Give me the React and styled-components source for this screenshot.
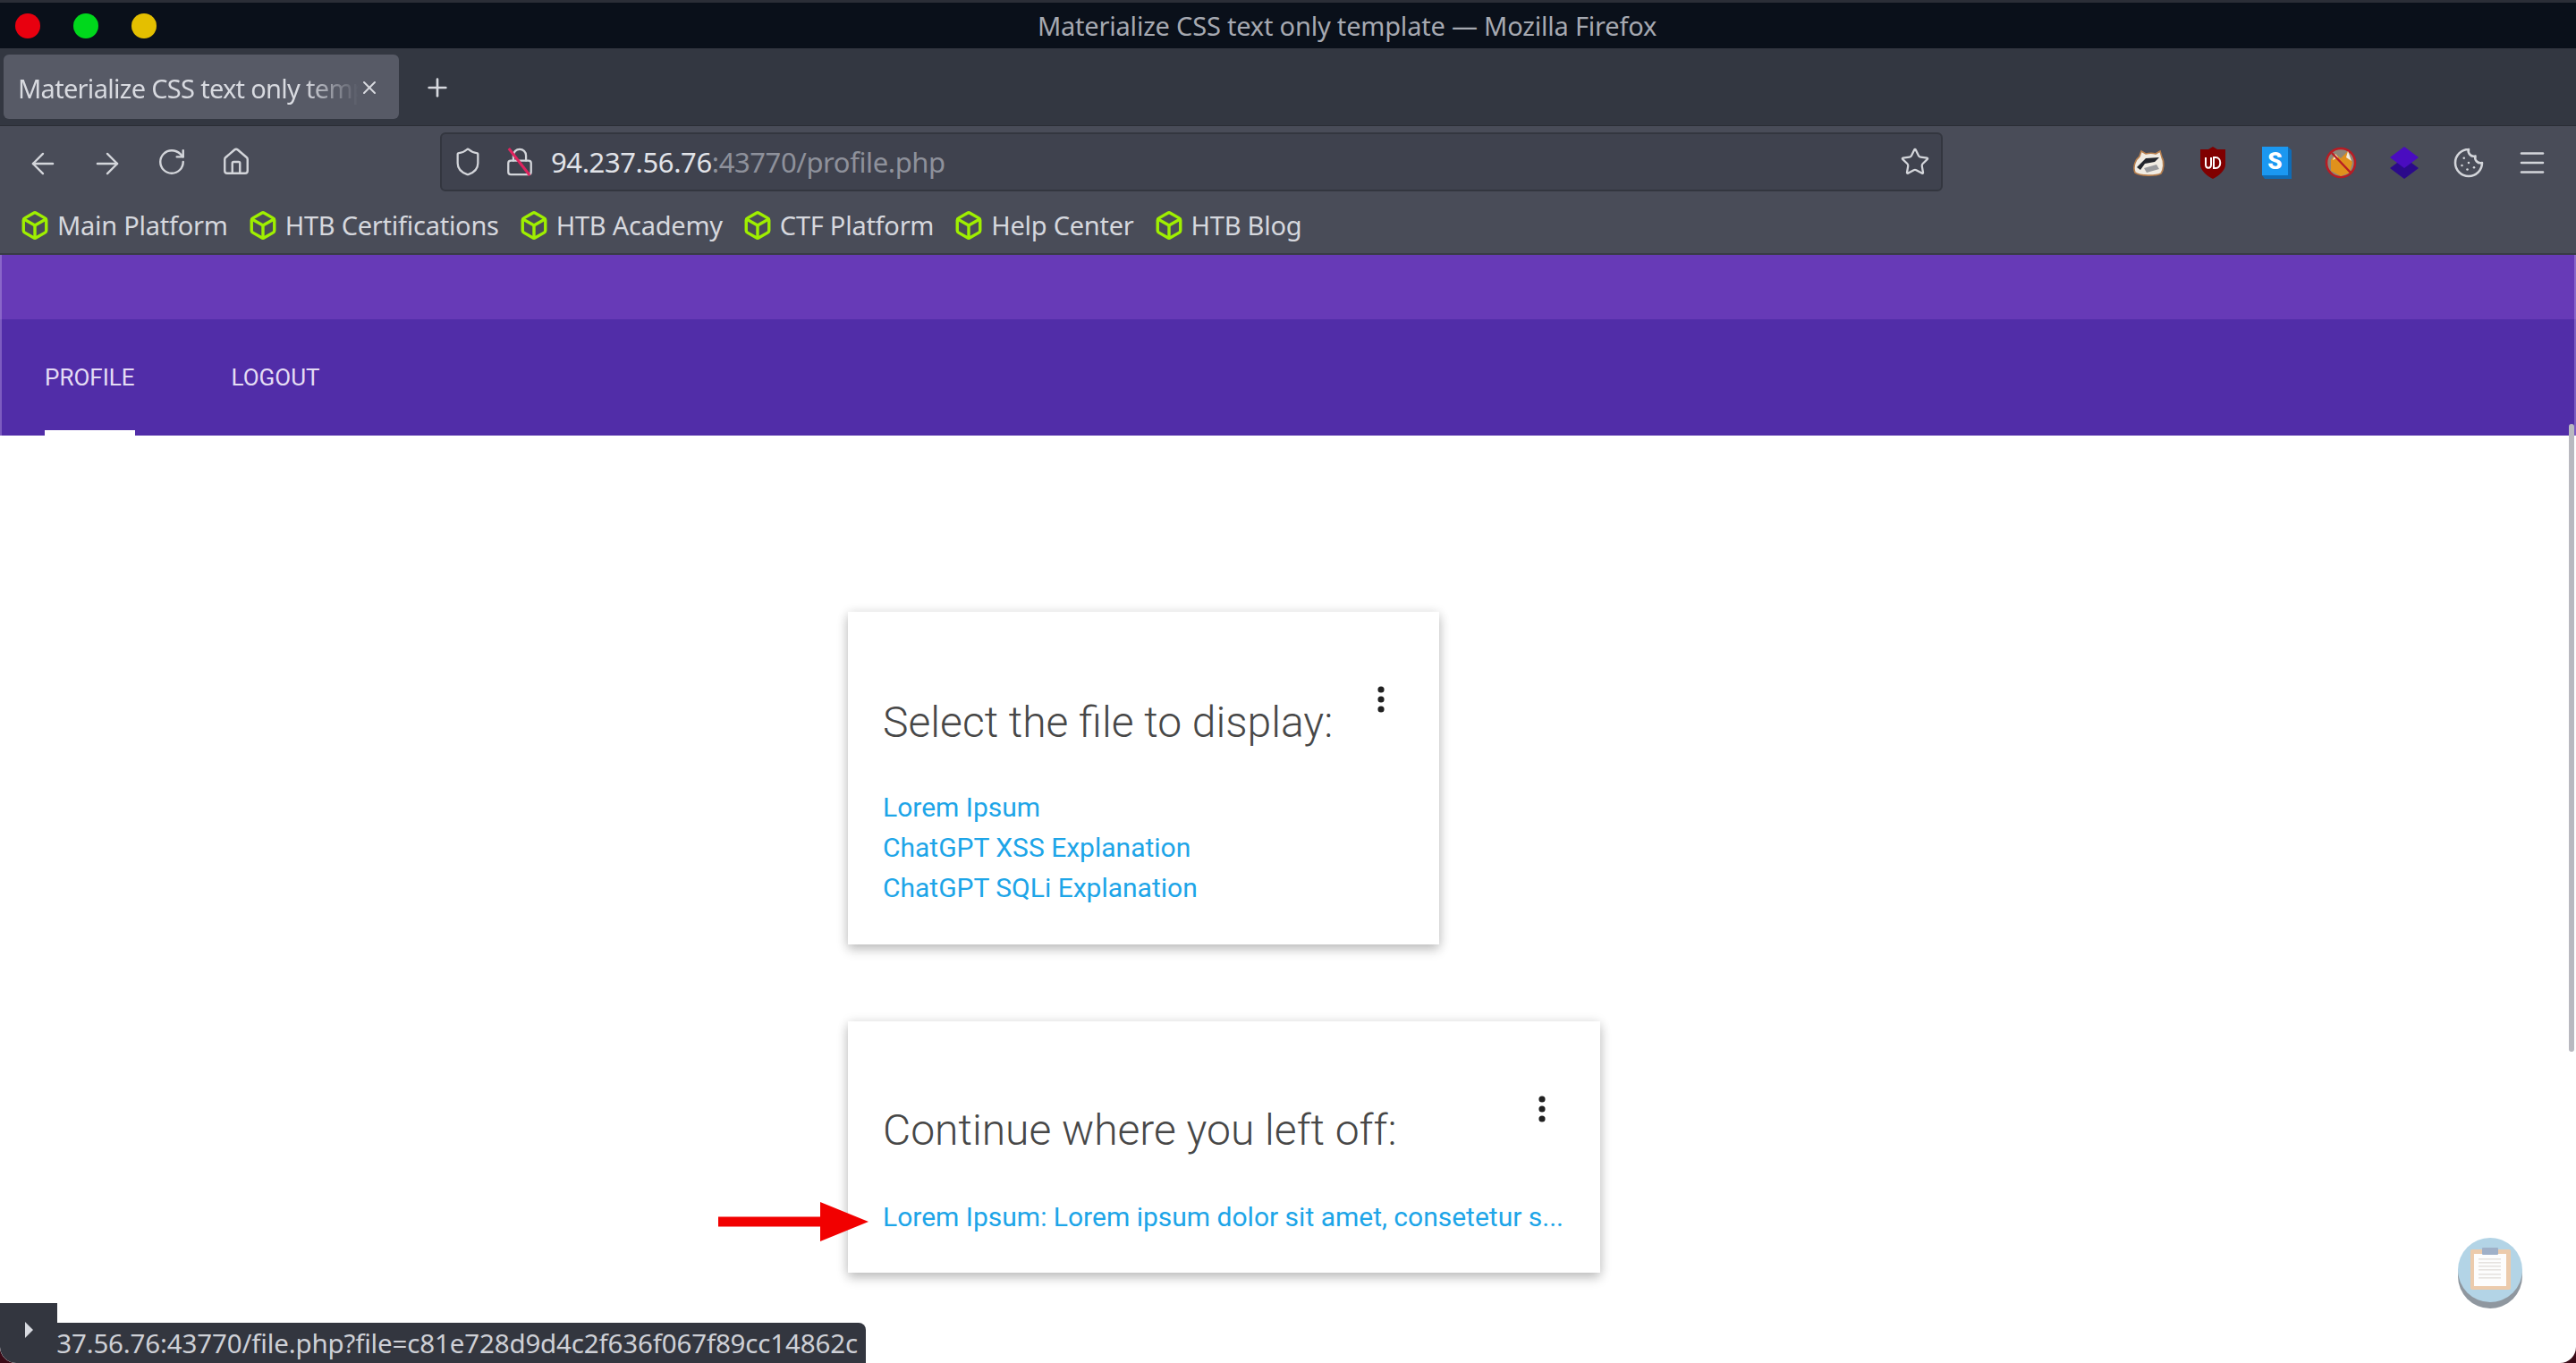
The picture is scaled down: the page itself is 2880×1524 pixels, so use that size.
import styled, { createGlobalStyle } from "styled-components";
import {
  ArrowLeft,
  ArrowRight,
  Box,
  Cookie,
  Home,
  Lock,
  Menu,
  Plus,
  RotateCw,
  Shield,
  Star,
  X,
} from "lucide-react";

const GlobalStyle = createGlobalStyle`
  html, body {
    margin: 0;
    padding: 0;
    height: 100%;
    background: #3a0a16;
    overflow: hidden;
  }
`;

const BrowserWindow = styled.div`
  position: relative;
  width: 2880px;
  height: 1524px;
  display: flex;
  flex-direction: column;
  overflow: hidden;
  border-radius: 0 0 18px 18px;
  background: #fff;
  font-family: "Noto Sans", sans-serif;
`;

const TitleBar = styled.div`
  height: 51px;
  flex: none;
  display: flex;
  align-items: center;
  padding-left: 17px;
  background: #0a101a;
  border-top: 3px solid #2b2e37;
`;

const TrafficLight = styled.span`
  width: 28px;
  height: 28px;
  margin-right: 37px;
  border-radius: 50%;
  background: ${({ $color }) => $color};
`;

const WindowTitle = styled.div`
  flex: 1;
  padding-right: 80px;
  text-align: center;
  color: #a6a9b1;
  font-size: 29px;
  letter-spacing: -0.2px;
`;

const TabStrip = styled.div`
  height: 87px;
  flex: none;
  display: flex;
  align-items: center;
  padding-left: 4px;
  box-sizing: border-box;
  background: #333741;
  border-bottom: 1px solid #2a2d35;
`;

const Tab = styled.div`
  width: 442px;
  height: 72px;
  box-sizing: border-box;
  display: flex;
  align-items: center;
  padding: 2px 21px 0 16px;
  border-radius: 6px;
  background: #575a66;
  color: #d8dae0;
  font-size: 29px;
  letter-spacing: -0.7px;
`;

const TabLabel = styled.span`
  flex: 1;
  overflow: hidden;
  white-space: nowrap;
  -webkit-mask-image: linear-gradient(to right, #000 84%, transparent 100%);
  mask-image: linear-gradient(to right, #000 84%, transparent 100%);
`;

const NewTab = styled.span`
  display: flex;
  margin-left: 27px;
  padding-top: 2px;
  color: #d6d8de;
`;

const NavBar = styled.div`
  height: 80px;
  flex: none;
  display: flex;
  align-items: center;
  background: #494c58;
`;

const NavIcon = styled.span`
  width: 72px;
  display: flex;
  justify-content: center;
  padding-top: 4px;
  color: #d3d5da;
`;

const NavButtons = styled.div`
  display: flex;
  width: 492px;
  padding-left: 12px;
  box-sizing: border-box;
`;

const UrlBar = styled.div`
  width: 1680px;
  height: 66px;
  flex: none;
  box-sizing: border-box;
  display: flex;
  align-items: center;
  padding: 0 12px 0 12px;
  border: 2px solid #33363f;
  border-radius: 6px;
  background: #3f424e;
  font-size: 31px;
  letter-spacing: -0.4px;
`;

const UrlIcon = styled.span`
  position: relative;
  display: flex;
  margin-right: ${({ $gap }) => $gap}px;
  color: #d3d5da;
`;

const LockSlash = styled.span`
  position: absolute;
  left: 15px;
  top: -2px;
  width: 3px;
  height: 38px;
  background: #e0245e;
  transform: rotate(-38deg);
`;

const UrlHost = styled.span`
  color: #e1e3e8;
`;

const UrlPath = styled.span`
  flex: 1;
  color: #8e919b;
`;

const Extensions = styled.div`
  flex: 1;
  display: flex;
  justify-content: flex-end;
  padding: 2px 13px 0 0;
`;

const ExtensionSlot = styled.span`
  width: 71.5px;
  height: 40px;
  display: flex;
  align-items: center;
  justify-content: center;
  color: #d3d5da;
`;

const BookmarksBar = styled.div`
  height: 64px;
  flex: none;
  display: flex;
  align-items: center;
  padding: 0 0 1px 22px;
  box-sizing: border-box;
  gap: 22px;
  background: #494c58;
  border-bottom: 2px solid #383b45;
`;

const Bookmark = styled.div`
  display: flex;
  align-items: center;
  gap: 8px;
  color: #d6d8de;
  font-size: 29px;
  letter-spacing: -0.25px;
  white-space: nowrap;
`;

const Header = styled.header`
  flex: none;
`;

const HeaderTop = styled.div`
  height: 72px;
  background: #673ab7;
  box-shadow: inset 2px 0 0 #8a66c9, inset -2px 0 0 #8a66c9;
`;

const TabsRow = styled.nav`
  height: 130px;
  display: flex;
  padding-left: 50px;
  gap: 108px;
  background: #512da8;
  box-shadow: inset 2px 0 0 #7d5cc0, inset -2px 0 0 #7d5cc0;
`;

const PageTab = styled.a`
  display: flex;
  align-items: center;
  box-sizing: border-box;
  height: 100%;
  padding-top: 6px;
  border-bottom: 6px solid ${({ $active }) => ($active ? "#fff" : "transparent")};
  color: #e4dcf4;
  font-family: Roboto, sans-serif;
  font-size: 26px;
  font-weight: 400;
  text-transform: uppercase;
`;

const Main = styled.main`
  flex: 1;
  display: flex;
  flex-direction: column;
  align-items: flex-start;
  gap: 86px;
  padding: 197px 0 0 948px;
  font-family: Roboto, sans-serif;
`;

const Card = styled.section`
  width: ${({ $width }) => $width}px;
  box-sizing: border-box;
  padding: ${({ $top }) => $top}px 39px ${({ $bottom }) => $bottom}px;
  background: #fff;
  box-shadow: 0 6px 12px rgba(0, 0, 0, 0.2), 0 1px 12px rgba(0, 0, 0, 0.12);
`;

const CardHead = styled.div`
  display: flex;
  justify-content: space-between;
  align-items: flex-start;
  margin-bottom: ${({ $gap }) => $gap}px;
`;

const CardTitle = styled.h2`
  margin: 0;
  color: #474747;
  font-size: 48px;
  font-weight: 300;
  line-height: 66px;
  white-space: nowrap;
`;

const MoreButton = styled.svg`
  flex: none;
  margin: ${({ $top }) => $top}px 20px 0 0;
`;

const FileLink = styled.a`
  display: block;
  color: #1da5e8;
  font-size: 30px;
  line-height: 45px;
  white-space: nowrap;
`;

const Arrow = styled.svg`
  position: absolute;
  left: 803px;
  top: 1344px;
`;

const Scrollbar = styled.div`
  position: absolute;
  left: 2872px;
  top: 474px;
  width: 6px;
  height: 702px;
  border-radius: 3px;
  background: #b9b9c0;
`;

const FloatingButton = styled.svg`
  position: absolute;
  left: 2744px;
  top: 1380px;
`;

const StatusToggle = styled.div`
  position: absolute;
  left: 0;
  bottom: 0;
  width: 64px;
  height: 67px;
  display: flex;
  align-items: center;
  justify-content: center;
  padding-bottom: 8px;
  box-sizing: border-box;
  border-bottom-left-radius: 18px;
  background: #33363f;
`;

const StatusPlay = styled.span`
  width: 0;
  height: 0;
  border-left: 9px solid #d8dae0;
  border-top: 9px solid transparent;
  border-bottom: 9px solid transparent;
`;

const StatusBar = styled.div`
  position: absolute;
  left: 64px;
  bottom: 0;
  width: 904px;
  height: 45px;
  box-sizing: border-box;
  display: flex;
  justify-content: flex-end;
  align-items: center;
  padding-right: 9px;
  overflow: hidden;
  border-top-right-radius: 8px;
  background: #33363f;
  color: #ced0d6;
  font-size: 29.5px;
  letter-spacing: -0.15px;
  white-space: nowrap;
`;

const bookmarks = [
  "Main Platform",
  "HTB Certifications",
  "HTB Academy",
  "CTF Platform",
  "Help Center",
  "HTB Blog",
];

const BadgerIcon = () => (
  <svg width="36" height="32" viewBox="0 0 36 32">
    <path d="M3 27 C0 20 4 12 8 9 L10 3 L15 6 C19 5 23 5 26 6 L31 3 L33 10 C36 15 35 24 32 28 C26 31 9 31 3 27Z" fill="#f1ece3" stroke="#b9814f" strokeWidth="1.6" />
    <path d="M5 21 L15 11 L30 10 L25 15 L14 17 L9 24Z" fill="#23262c" />
    <path d="M13 22 L27 18 L30 23 L16 27Z" fill="#9a9b9e" />
  </svg>
);

const UblockIcon = () => (
  <svg width="30" height="36" viewBox="0 0 30 36">
    <path d="M15 0 L20 3 L29 3 L29 20 C29 27 21 33 15 36 C9 33 1 27 1 20 L1 3 L10 3Z" fill="#800000" />
    <path d="M7 12 V20 C7 25 13 25 13 20 V12" fill="none" stroke="#fff" strokeWidth="2" />
    <path d="M16 12 H18 C25 12 25 24 18 24 H16Z" fill="none" stroke="#fff" strokeWidth="2" />
  </svg>
);

const StylusIcon = () => (
  <svg width="33" height="36" viewBox="0 0 33 36">
    <path d="M0 32 L3 36 L33 36 L33 4 L29 0Z" fill="#0f6cb6" />
    <rect width="29" height="32" fill="#1b98f1" />
    <text x="14.5" y="25" textAnchor="middle" fill="#fff" fontFamily="Roboto, sans-serif" fontWeight="900" fontSize="26">S</text>
  </svg>
);

const FoxBlockIcon = () => (
  <svg width="36" height="36" viewBox="0 0 36 36">
    <circle cx="18" cy="18" r="16" fill="#8d8579" stroke="#b71c24" strokeWidth="2.6" />
    <path d="M7 27 L7 15 L12 8 L18 13 L26 5 L31 18 L28 29 L18 33Z" fill="#e0911c" />
    <path d="M12 8 L15 12 L9 15Z M26 5 L30 16 L24 12Z" fill="#f3ece0" />
    <path d="M8 7 L29 29" stroke="#b71c24" strokeWidth="2.4" />
  </svg>
);

const LayersIcon = () => (
  <svg width="32" height="36" viewBox="0 0 32 36">
    <path d="M16 12 L32 24 L16 36 L0 24Z" fill="#2b0a8a" />
    <path d="M16 0 L32 12 L16 24 L0 12Z" fill="#4a0cc0" />
  </svg>
);

const ClipboardBadge = () => (
  <FloatingButton width="80" height="88" viewBox="0 0 80 88">
    <circle cx="40" cy="47" r="36" fill="#8f979f" />
    <circle cx="40" cy="40" r="36" fill="#b3d4e6" />
    <rect x="18" y="17" width="45" height="45" rx="2" fill="#eccbac" />
    <rect x="22" y="22" width="36" height="36" fill="#fdfdfd" />
    <rect x="31" y="15" width="18" height="8" rx="1" fill="#9fb0c8" />
    {[27, 31, 35, 39, 44, 48].map((y) => (
      <rect key={y} x="27" y={y} width="25" height="1.6" fill="#e6e3e0" />
    ))}
  </FloatingButton>
);

const MoreDots = ({ top }) => (
  <MoreButton $top={top} width="12" height="32" viewBox="0 0 12 32">
    <circle cx="6" cy="5" r="3.6" fill="#212121" />
    <circle cx="6" cy="16" r="3.6" fill="#212121" />
    <circle cx="6" cy="27" r="3.6" fill="#212121" />
  </MoreButton>
);

export default function App() {
  return (
    <BrowserWindow>
      <GlobalStyle />
      <TitleBar>
        <TrafficLight $color="#e8000f" />
        <TrafficLight $color="#00d81c" />
        <TrafficLight $color="#e4bf00" />
        <WindowTitle>Materialize CSS text only template — Mozilla Firefox</WindowTitle>
      </TitleBar>

      <TabStrip>
        <Tab>
          <TabLabel>Materialize CSS text only template</TabLabel>
          <X size={24} strokeWidth={2} />
        </Tab>
        <NewTab>
          <Plus size={32} strokeWidth={2} />
        </NewTab>
      </TabStrip>

      <NavBar>
        <NavButtons>
          <NavIcon><ArrowLeft size={38} strokeWidth={1.5} /></NavIcon>
          <NavIcon><ArrowRight size={38} strokeWidth={1.5} /></NavIcon>
          <NavIcon><RotateCw size={34} strokeWidth={1.7} /></NavIcon>
          <NavIcon><Home size={34} strokeWidth={1.7} /></NavIcon>
        </NavButtons>
        <UrlBar>
          <UrlIcon $gap={24}><Shield size={34} strokeWidth={1.6} /></UrlIcon>
          <UrlIcon $gap={18}>
            <Lock size={34} strokeWidth={1.6} />
            <LockSlash />
          </UrlIcon>
          <UrlHost>94.237.56.76</UrlHost>
          <UrlPath>:43770/profile.php</UrlPath>
          <UrlIcon $gap={0}><Star size={34} strokeWidth={1.6} /></UrlIcon>
        </UrlBar>
        <Extensions>
          <ExtensionSlot><BadgerIcon /></ExtensionSlot>
          <ExtensionSlot><UblockIcon /></ExtensionSlot>
          <ExtensionSlot><StylusIcon /></ExtensionSlot>
          <ExtensionSlot><FoxBlockIcon /></ExtensionSlot>
          <ExtensionSlot><LayersIcon /></ExtensionSlot>
          <ExtensionSlot><Cookie size={36} strokeWidth={1.7} /></ExtensionSlot>
          <ExtensionSlot><Menu size={36} strokeWidth={1.7} /></ExtensionSlot>
        </Extensions>
      </NavBar>

      <BookmarksBar>
        {bookmarks.map((name) => (
          <Bookmark key={name}>
            <Box size={34} strokeWidth={2.4} color="#9fef00" />
            {name}
          </Bookmark>
        ))}
      </BookmarksBar>

      <Header>
        <HeaderTop />
        <TabsRow>
          <PageTab $active>Profile</PageTab>
          <PageTab>Logout</PageTab>
        </TabsRow>
      </Header>

      <Main>
        <Card $width={661} $top={91} $bottom={41}>
          <CardHead $gap={39}>
            <CardTitle>Select the file to display:</CardTitle>
            <MoreDots top={-9} />
          </CardHead>
          <FileLink>Lorem Ipsum</FileLink>
          <FileLink>ChatGPT XSS Explanation</FileLink>
          <FileLink>ChatGPT SQLi Explanation</FileLink>
        </Card>
        <Card $width={841} $top={89} $bottom={40}>
          <CardHead $gap={41}>
            <CardTitle>Continue where you left off:</CardTitle>
            <MoreDots top={-7} />
          </CardHead>
          <FileLink>Lorem Ipsum: Lorem ipsum dolor sit amet, consetetur s...</FileLink>
        </Card>
      </Main>

      <Arrow width="168" height="44" viewBox="0 0 168 44">
        <path d="M0 16.5 H114 V0 L168 22 L114 44 V27.5 H0Z" fill="#f20000" />
      </Arrow>
      <Scrollbar />
      <ClipboardBadge />
      <StatusToggle><StatusPlay /></StatusToggle>
      <StatusBar>94.237.56.76:43770/file.php?file=c81e728d9d4c2f636f067f89cc14862c</StatusBar>
    </BrowserWindow>
  );
}
